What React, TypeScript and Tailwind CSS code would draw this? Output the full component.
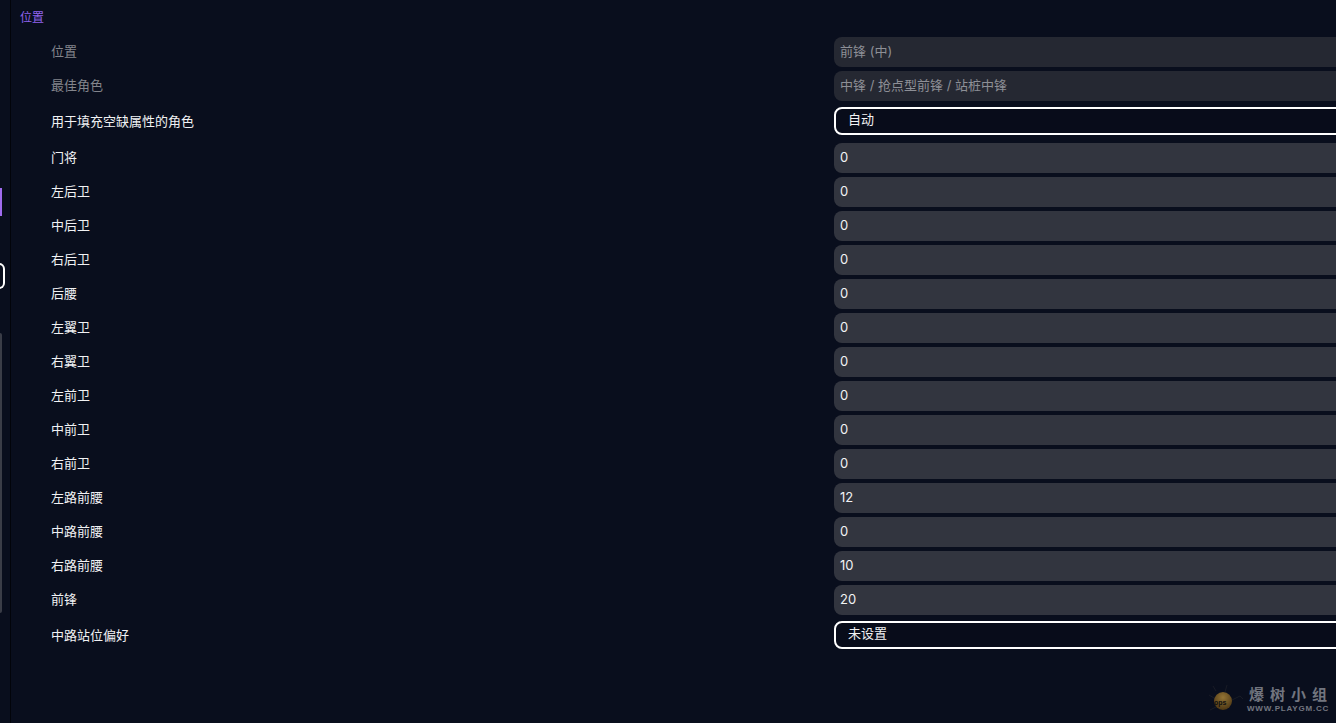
const rowsA = [
  ["门将", "0"],
  ["左后卫", "0"],
  ["中后卫", "0"],
  ["右后卫", "0"],
  ["后腰", "0"],
  ["左翼卫", "0"],
  ["右翼卫", "0"],
  ["左前卫", "0"],
  ["中前卫", "0"],
  ["右前卫", "0"],
  ["左路前腰", "12"],
  ["中路前腰", "0"],
  ["右路前腰", "10"],
  ["前锋", "20"],
];

function Label({ text, muted, shift }: { text: string; muted?: boolean; shift?: boolean }) {
  return <div className={`w-[783px] shrink-0 ${shift ? "pb-0.5" : ""} ${muted ? "text-[#83858c]" : "text-[#f1f2f4]"}`}>{text}</div>;
}

function ReadRow({ label, value }: { label: string; value: string }) {
  return (
    <div className="flex items-center h-[30px] mb-1">
      <Label text={label} muted shift />
      <div className="w-[540px] shrink-0 h-[30px] rounded-lg bg-[#252832] text-[#8d8f96] px-1.5 pb-0.5 flex items-center">{value}</div>
    </div>
  );
}

function NumRow({ label, value }: { label: string; value: string }) {
  return (
    <div className="flex items-center h-[30px] mb-1">
      <Label text={label} shift />
      <div className="w-[540px] shrink-0 h-[30px] rounded-lg bg-[#32353f] text-[#f1f2f4] px-1.5 pb-0.5 flex items-center">{value}</div>
    </div>
  );
}

function SelectRow({ label, value, className }: { label: string; value: string; className: string }) {
  return (
    <div className={`flex items-center h-[28px] ${className}`}>
      <Label text={label} />
      <div className="w-[540px] shrink-0 h-[28px] rounded-lg border-2 border-white bg-[#080c1a] text-[#f1f2f4] pl-3 pb-1 flex items-center">{value}</div>
    </div>
  );
}

export default function App() {
  return (
    <div
      className="relative flex h-[723px] w-[1336px] overflow-hidden bg-[#090e1d] text-[13px] leading-none"
      style={{ fontFamily: '"Inter", "Noto Sans CJK SC", sans-serif' }}
    >
      <aside className="w-[11px] shrink-0 border-r border-[#02040a] flex flex-col items-start">
        <div className="mt-[188px] h-7 w-0.5 bg-[#a06cf0]" />
        <div className="mt-[47px] h-[26px] w-[6px] -ml-px rounded-r-md border-2 border-l-0 border-white" />
        <div className="mt-11 h-[280px] w-0.5 rounded-r-sm bg-[#3a3d47]" />
      </aside>
      <main className="flex-1 min-w-0">
        <div className="h-[37px] pl-[9px] pt-[10px] text-xs text-[#8f63ee]">位置</div>
        <div className="pl-10">
          <ReadRow label="位置" value="前锋 (中)" />
          <ReadRow label="最佳角色" value="中锋 / 抢点型前锋 / 站桩中锋" />
          <SelectRow label="用于填充空缺属性的角色" value="自动" className="mt-1.5 mb-2" />
          {rowsA.map(([l, v]) => (
            <NumRow key={l} label={l} value={v} />
          ))}
          <SelectRow label="中路站位偏好" value="未设置" className="mt-1.5" />
        </div>
      </main>
      <div className="absolute left-[1208px] top-[680px] flex items-center opacity-60">
        <svg width="36" height="38" viewBox="0 0 36 38" fill="none">
          <defs>
            <radialGradient id="ball" cx="0.5" cy="0.3" r="0.7">
              <stop offset="0" stopColor="#f0b845" />
              <stop offset="1" stopColor="#7a520e" />
            </radialGradient>
          </defs>
          <path d="M6 18 1 15M8 11 5 6M17 12l2-7M24 20l8-4 3 3M8 27l-6 3" stroke="#23252c" strokeWidth="1" />
          <circle cx="15" cy="21" r="9" fill="url(#ball)" />
          <text x="6" y="25" fontSize="7" fontWeight="700" fill="#15120a" style={{ fontFamily: '"Liberation Sans", sans-serif' }}>ops</text>
        </svg>
        <div className="ml-[3px] flex flex-col items-center">
          <div className="text-[15px] font-bold tracking-[6px] mr-[-6px] text-[#b8bac0]" style={{ fontFamily: '"Noto Sans CJK SC", sans-serif' }}>爆树小组</div>
          <div className="mt-1 text-[8px] font-bold tracking-[0.8px] text-[#b8bac0]" style={{ fontFamily: '"Liberation Sans", sans-serif' }}>WWW.PLAYGM.CC</div>
        </div>
      </div>
    </div>
  );
}
